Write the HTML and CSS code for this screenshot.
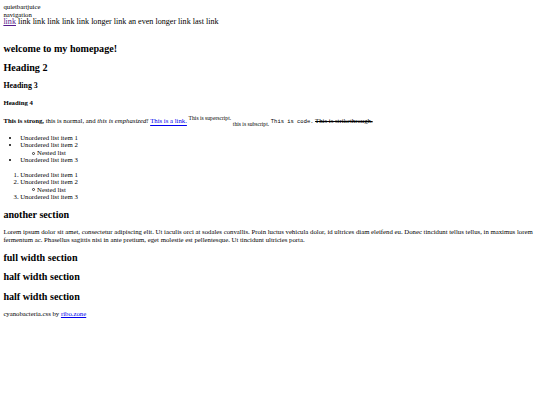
FILE: index.html
```html
<!DOCTYPE html>
<html lang="en">
<head>
<meta charset="utf-8">
<title>quietbartjuice</title>
<link rel="stylesheet" href="styles.css">
</head>
<body class="page">
<header class="site-header">
  <div class="site-name">quietbartjuice</div>
  <nav class="site-nav">
    <div class="nav-title">navigation</div>
    <div class="nav-links"><a class="link visited" href="#">link</a> <a class="link plain" href="#">link</a> <a class="link plain" href="#">link</a> <a class="link plain" href="#">link</a> <a class="link plain" href="#">link</a> <a class="link plain" href="#">link</a> <a class="link plain" href="#">longer link</a> <a class="link plain" href="#">an even longer link</a> <a class="link plain" href="#">last link</a></div>
  </nav>
</header>
<main class="content">
  <section class="section">
    <h1 class="h-big">welcome to my homepage!</h1>
    <h2 class="h-big">Heading 2</h2>
    <h3 class="h-three">Heading 3</h3>
    <h4 class="h-four">Heading 4</h4>
    <p class="para"><strong class="strong">This is strong,</strong> this is normal, and <em class="em">this is emphasized!</em> <a class="link" href="#">This is a link.</a> <sup class="sup">This is superscript.</sup> <sub class="sub">this is subscript.</sub> <code class="code">This is code.</code> <s class="strike">This is strikethrough.</s></p>
    <ul class="list list-disc">
      <li>Unordered list item 1</li>
      <li>Unordered list item 2
        <ul class="list-nested">
          <li class="nested-item">Nested list</li>
        </ul>
      </li>
      <li>Unordered list item 3</li>
    </ul>
    <ol class="list list-num">
      <li>Unordered list item 1</li>
      <li>Unordered list item 2
        <ul class="list-nested">
          <li class="nested-item">Nested list</li>
        </ul>
      </li>
      <li>Unordered list item 3</li>
    </ol>
  </section>
  <section class="section">
    <h2 class="h-big">another section</h2>
    <p class="para">Lorem ipsum dolor sit amet, consectetur adipiscing elit. Ut iaculis orci at sodales convallis. Proin luctus vehicula dolor, id ultrices diam eleifend eu. Donec tincidunt tellus tellus, in maximus lorem fermentum ac. Phasellus sagittis nisi in ante pretium, eget molestie est pellentesque. Ut tincidunt ultricies porta.</p>
  </section>
  <section class="section">
    <h2 class="h-big">full width section</h2>
  </section>
  <section class="section">
    <h2 class="h-big">half width section</h2>
  </section>
  <section class="section">
    <h2 class="h-big">half width section</h2>
  </section>
</main>
<footer class="site-footer">
  <p class="para">cyanobacteria.css by <a class="link" href="#">ribo.zone</a></p>
</footer>
</body>
</html>
```
FILE: styles.css
```css
html {
  background: #ffffff;
}
.page {
  margin: 3.375px;
  font-family: "Liberation Serif", "Times New Roman", serif;
  font-size: 6.75px;
  line-height: 1.11;
  color: #000000;
}
.site-header {
  padding-bottom: 7px;
}
.nav-links {
  font-size: 1.2em;
}
.link {
  color: #0000ee;
  text-decoration: underline;
}
.link.visited {
  color: #551a8b;
}
.link.plain {
  color: #000000;
  text-decoration: none;
}
.h-big {
  font-size: 1.5em;
  font-weight: bold;
  line-height: normal;
  margin: 0.83em 0;
}
.h-three {
  font-size: 1.17em;
  font-weight: bold;
  line-height: normal;
  margin: 1em 0;
}
.h-four {
  font-size: 1em;
  font-weight: bold;
  line-height: normal;
  margin: 1.33em 0;
}
.para {
  margin: 1em 0;
}
.strong {
  font-weight: bold;
}
.em {
  font-style: italic;
}
.sup {
  font-size: smaller;
  vertical-align: super;
}
.sub {
  font-size: smaller;
  vertical-align: sub;
}
.code {
  font-family: "Liberation Mono", "Courier New", monospace;
  font-size: 0.8125em;
}
.strike {
  text-decoration: line-through;
}
.list {
  margin: 1em 0;
  padding-left: 2.5em;
}
.list-disc {
  list-style-type: disc;
}
.list-num {
  list-style-type: decimal;
}
.list-nested {
  margin: 0;
  padding-left: 2.5em;
  list-style-type: none;
}
.nested-item::before {
  content: "";
  display: inline-block;
  box-sizing: border-box;
  width: 2.8px;
  height: 2.8px;
  border: 0.6px solid #333333;
  border-radius: 50%;
  margin-left: -5px;
  margin-right: 2.2px;
  vertical-align: 0.4px;
}
```
